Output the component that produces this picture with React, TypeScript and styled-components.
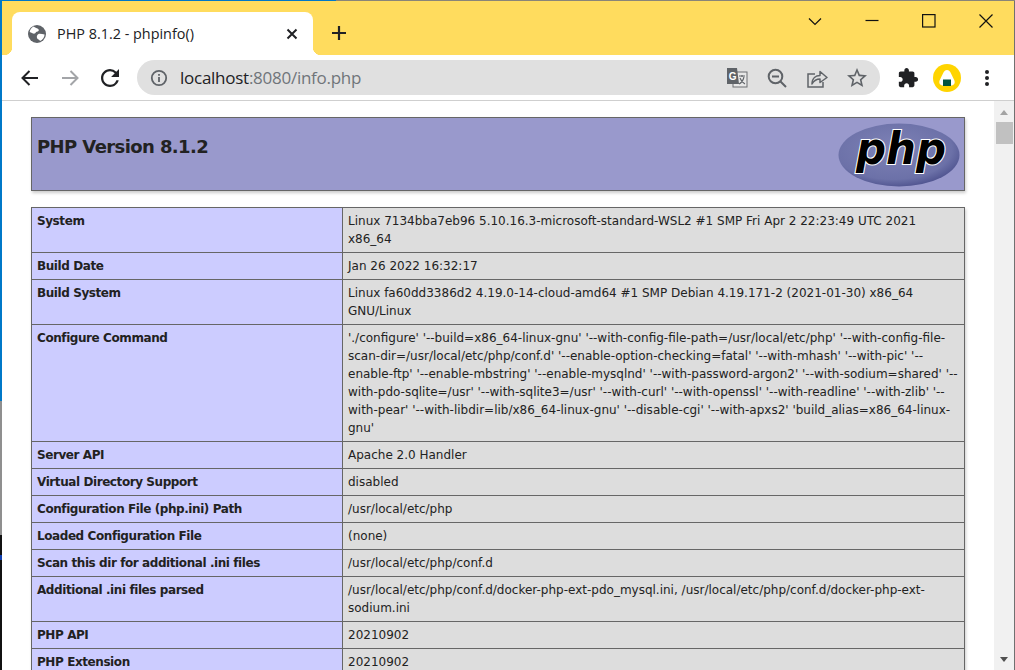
import React from "react";
import styled, { createGlobalStyle } from "styled-components";

const Global = createGlobalStyle`
  html, body { margin: 0; padding: 0; height: 100%; overflow: hidden; background: #fff; }
  #root { height: 100%; }
`;

const Screen = styled.div`
  width: 1015px;
  height: 670px;
  display: flex;
  flex-direction: column;
  overflow: hidden;
`;
const TopEdge = styled.div`
  height: 1px;
  flex: none;
  display: flex;
`;
const EdgePiece = styled.div<{ $c: string; $w?: number; $h?: number }>`
  background: ${(p) => p.$c};
  ${(p) => (p.$w ? `width:${p.$w}px;flex:none;` : "")}
  ${(p) => (p.$h ? `height:${p.$h}px;flex:none;` : "")}
  ${(p) => (!p.$w && !p.$h ? "flex:1;" : "")}
`;
const Middle = styled.div`
  flex: 1;
  min-height: 0;
  display: flex;
`;
const LeftEdge = styled.div`
  width: 2px;
  flex: none;
  display: flex;
  flex-direction: column;
`;
const RightEdge = styled.div`
  width: 1px;
  flex: none;
  background: #707070;
`;
const Win = styled.div`
  flex: 1;
  min-width: 0;
  display: flex;
  flex-direction: column;
`;

const TitleBar = styled.div`
  height: 54px;
  flex: none;
  background: #ffdc5e;
  display: flex;
  align-items: flex-end;
  padding-left: 10px;
`;
const Tab = styled.div`
  position: relative;
  width: 301px;
  height: 43px;
  box-sizing: border-box;
  background: #fff;
  border-radius: 8px 8px 0 0;
  display: flex;
  align-items: center;
  padding: 0 15px 0 16px;
  &::before, &::after {
    content: "";
    position: absolute;
    bottom: 0;
    width: 8px;
    height: 8px;
  }
  &::before { left: -8px; background: radial-gradient(circle at 0 0, #ffdc5e 8px, #fff 8.5px); }
  &::after { right: -8px; background: radial-gradient(circle at 100% 0, #ffdc5e 8px, #fff 8.5px); }
`;
const TabTitle = styled.span`
  flex: 1;
  margin-left: 11px;
  font: 14.4px/18px "Open Sans", "Noto Sans", sans-serif;
  color: #202124;
  white-space: nowrap;
`;
const NewTab = styled.div`
  width: 18px;
  height: 18px;
  margin: 0 0 13px 17px;
  display: flex;
`;
const Spacer = styled.div`
  flex: 1;
`;
const WinControls = styled.div`
  align-self: flex-start;
  display: flex;
  margin-top: 13px;
  padding-right: 21px;
  gap: 43px;
`;
const WinGlyph = styled.svg`
  width: 14px;
  height: 14px;
  display: block;
  fill: none;
  stroke: #111;
  stroke-width: 1.2;
`;

const Toolbar = styled.div`
  height: 46px;
  flex: none;
  box-sizing: border-box;
  background: #fff;
  border-bottom: 1px solid #cfcfcf;
  display: flex;
  align-items: center;
  padding-left: 16px;
`;
const NavIcon = styled.svg<{ $gap?: number }>`
  width: 24px;
  height: 24px;
  flex: none;
  margin-right: ${(p) => p.$gap ?? 16}px;
  display: block;
`;
const Omnibox = styled.div`
  width: 743px;
  height: 35px;
  margin-left: 2px;
  flex: none;
  background: #e0e0e0;
  border-radius: 18px;
  display: flex;
  align-items: center;
  padding: 0 12px 0 13px;
  box-sizing: border-box;
`;
const Url = styled.span`
  flex: 1;
  margin-left: 12px;
  font: 17px/22px "Open Sans", "Noto Sans", sans-serif;
  letter-spacing: -0.26px;
  color: #70757a;
  white-space: nowrap;
`;
const Host = styled.span`
  color: #202124;
`;
const OmniIcons = styled.div`
  display: flex;
  align-items: center;
  gap: 18px;
`;
const OmniIcon = styled.svg`
  width: 22px;
  height: 22px;
  display: block;
  flex: none;
`;
const Actions = styled.div`
  display: flex;
  align-items: center;
  margin-left: 17px;
`;
const Puzzle = styled.svg`
  width: 22px;
  height: 22px;
  display: block;
  margin-right: 14px;
`;
const Avatar = styled.svg`
  width: 28px;
  height: 28px;
  display: block;
  margin-right: 22px;
`;
const Dots = styled.svg`
  width: 8px;
  height: 18px;
  display: block;
`;

const Content = styled.div`
  flex: 1;
  min-height: 0;
  display: flex;
  background: #fff;
`;
const Page = styled.main`
  flex: 1;
  min-width: 0;
  overflow: hidden;
  padding: 16px 29px 0 29px;
  font-family: "DejaVu Sans", Verdana, sans-serif;
  color: #222;
`;
const Banner = styled.header`
  height: 74px;
  box-sizing: border-box;
  width: 934px;
  background: #9999cc;
  border: 1px solid #666;
  box-shadow: 1px 2px 3px #ccc;
  display: flex;
  justify-content: space-between;
  padding: 5px 4px 0 5px;
`;
const Heading = styled.h1`
  margin: 12px 0 0;
  font-size: 18px;
  line-height: 24px;
  font-weight: bold;
  letter-spacing: -0.6px;
  color: #222;
`;
const Logo = styled.svg`
  width: 122px;
  height: 64px;
  flex: none;
  display: block;
`;
const Info = styled.table`
  width: 934px;
  margin-top: 16px;
  border-collapse: collapse;
  table-layout: fixed;
  font-size: 12px;
  line-height: 18px;
  box-shadow: 1px 2px 3px #ccc;
`;
const Key = styled.td`
  width: 300px;
  background: #ccccff;
  font-weight: bold;
  letter-spacing: -0.42px;
  border: 1px solid #666;
  padding: 4px 5px;
  vertical-align: baseline;
`;
const Val = styled.td`
  background: #dddddd;
  border: 1px solid #666;
  padding: 4px 5px;
  vertical-align: baseline;
  word-break: normal;
`;

const Scrollbar = styled.aside`
  position: relative;
  width: 20px;
  flex: none;
  background: #f1f1f1;
`;
const Thumb = styled.div`
  position: absolute;
  top: 21px;
  left: 2px;
  right: 1px;
  height: 22px;
  background: #c1c1c1;
`;
const ArrowUp = styled.div`
  position: absolute;
  top: 9px;
  left: 6px;
  border-left: 4.5px solid transparent;
  border-right: 4.5px solid transparent;
  border-bottom: 5px solid #a3a3a3;
`;
const ArrowDown = styled.div`
  position: absolute;
  bottom: 8px;
  left: 6px;
  border-left: 4.5px solid transparent;
  border-right: 4.5px solid transparent;
  border-top: 5px solid #505050;
`;

const rows: [string, string][] = [
  ["System", "Linux 7134bba7eb96 5.10.16.3-microsoft-standard-WSL2 #1 SMP Fri Apr 2 22:23:49 UTC 2021 x86_64"],
  ["Build Date", "Jan 26 2022 16:32:17"],
  ["Build System", "Linux fa60dd3386d2 4.19.0-14-cloud-amd64 #1 SMP Debian 4.19.171-2 (2021-01-30) x86_64 GNU/Linux"],
  ["Configure Command", "'./configure' '--build=x86_64-linux-gnu' '--with-config-file-path=/usr/local/etc/php' '--with-config-file-scan-dir=/usr/local/etc/php/conf.d' '--enable-option-checking=fatal' '--with-mhash' '--with-pic' '--enable-ftp' '--enable-mbstring' '--enable-mysqlnd' '--with-password-argon2' '--with-sodium=shared' '--with-pdo-sqlite=/usr' '--with-sqlite3=/usr' '--with-curl' '--with-openssl' '--with-readline' '--with-zlib' '--with-pear' '--with-libdir=lib/x86_64-linux-gnu' '--disable-cgi' '--with-apxs2' 'build_alias=x86_64-linux-gnu'"],
  ["Server API", "Apache 2.0 Handler"],
  ["Virtual Directory Support", "disabled"],
  ["Configuration File (php.ini) Path", "/usr/local/etc/php"],
  ["Loaded Configuration File", "(none)"],
  ["Scan this dir for additional .ini files", "/usr/local/etc/php/conf.d"],
  ["Additional .ini files parsed", "/usr/local/etc/php/conf.d/docker-php-ext-pdo_mysql.ini, /usr/local/etc/php/conf.d/docker-php-ext-sodium.ini"],
  ["PHP API", "20210902"],
  ["PHP Extension", "20210902"],
];

export default function App() {
  return (
    <Screen>
      <Global />
      <TopEdge>
        <EdgePiece $c="#0078c8" $w={336} />
        <EdgePiece $c="#8a8578" />
      </TopEdge>
      <Middle>
        <LeftEdge>
          <EdgePiece $c="#0078c8" $h={400} />
          <EdgePiece $c="#8f8f8f" $h={134} />
          <EdgePiece $c="#111111" $h={20} />
          <EdgePiece $c="#1040b0" $h={5} />
          <EdgePiece $c="#111111" />
        </LeftEdge>
        <Win>
          <TitleBar>
            <Tab>
              <svg width="18" height="18" viewBox="0 0 18 18" style={{ flex: "none" }}>
                <circle cx="9" cy="9" r="9" fill="#5f6368" />
                <path d="M5.5 1.6 C7 3 9.5 3 10.5 4.2 C11.5 5.5 10 6.5 8.8 6.8 C7.5 7.1 7.8 8.3 6.5 8.6 C5 8.9 3.5 7.5 1.7 7 C2 4.6 3.5 2.7 5.5 1.6Z" fill="#fff" />
                <path d="M10.5 9 C12.5 8.5 14.5 9.5 16.6 9.5 C16.4 12.5 14.5 15 12 16 C11.5 14.5 9.5 14.5 9 13 C8.5 11.5 9 9.5 10.5 9Z" fill="#fff" />
              </svg>
              <TabTitle>PHP 8.1.2 - phpinfo()</TabTitle>
              <svg width="12" height="12" viewBox="0 0 12 12" style={{ flex: "none" }}>
                <path d="M1.5 1.5 L10.5 10.5 M10.5 1.5 L1.5 10.5" stroke="#202124" strokeWidth="2" />
              </svg>
            </Tab>
            <NewTab>
              <svg width="18" height="18" viewBox="0 0 18 18">
                <path d="M9 2 V16 M2 9 H16" stroke="#202124" strokeWidth="2.2" />
              </svg>
            </NewTab>
            <Spacer />
            <WinControls>
              <WinGlyph viewBox="0 0 14 14"><path d="M1 4.5 L7 10.5 L13 4.5" /></WinGlyph>
              <WinGlyph viewBox="0 0 14 14"><path d="M0.5 6.5 H13.5" /></WinGlyph>
              <WinGlyph viewBox="0 0 14 14"><rect x="0.6" y="0.6" width="12.4" height="12.4" /></WinGlyph>
              <WinGlyph viewBox="0 0 14 14"><path d="M0.5 0.5 L13.5 13.5 M13.5 0.5 L0.5 13.5" /></WinGlyph>
            </WinControls>
          </TitleBar>
          <Toolbar>
            <NavIcon viewBox="0 0 24 24" $gap={16}>
              <path d="M20 12 H5 M11.5 5 L4.5 12 L11.5 19" fill="none" stroke="#202124" strokeWidth="2" />
            </NavIcon>
            <NavIcon viewBox="0 0 24 24" $gap={16}>
              <path d="M4 12 H19 M12.5 5 L19.5 12 L12.5 19" fill="none" stroke="#a3a5a8" strokeWidth="2" />
            </NavIcon>
            <NavIcon viewBox="1.33 1.33 21.33 21.33" $gap={13}>
              <path fill="#202124" d="M17.65 6.35A7.958 7.958 0 0 0 12 4C7.58 4 4 7.58 4 12s3.58 8 8 8c3.73 0 6.84-2.55 7.73-6h-2.08A5.99 5.99 0 0 1 12 18c-3.31 0-6-2.69-6-6s2.69-6 6-6c1.66 0 3.14.69 4.22 1.78L13 11h7V4l-2.35 2.35z" />
            </NavIcon>
            <Omnibox>
              <svg width="18" height="18" viewBox="0 0 18 18" style={{ flex: "none" }}>
                <circle cx="9" cy="9" r="7.2" fill="none" stroke="#5f6368" strokeWidth="1.8" />
                <path d="M9 8 V13 M9 5 V6.8" stroke="#5f6368" strokeWidth="1.8" />
              </svg>
              <Url><Host>localhost</Host>:8080/info.php</Url>
              <OmniIcons>
                <OmniIcon viewBox="0 0 22 22">
                  <rect x="7" y="5" width="14" height="15" fill="#e8e8e8" stroke="#6d6f72" strokeWidth="1" />
                  <path d="M13 9 H19 M16 8 V10 M18 10 C17 14 15 16 13 17 M14 11 C15 14 17 16 19 17" fill="none" stroke="#5f6368" strokeWidth="1.1" />
                  <path d="M1 1 H11 L13 17 H1 Z" fill="#5f6368" />
                  <text x="2.8" y="12.5" fontFamily="'Liberation Sans', sans-serif" fontWeight="700" fontSize="10" fill="#fff">G</text>
                </OmniIcon>
                <OmniIcon viewBox="0 0 22 22">
                  <circle cx="9.5" cy="9.5" r="6.8" fill="none" stroke="#5f6368" strokeWidth="2" />
                  <path d="M6 9.5 H13 M14.5 14.5 L20 20" fill="none" stroke="#5f6368" strokeWidth="2" />
                </OmniIcon>
                <OmniIcon viewBox="0 0 22 22">
                  <path d="M9 7 H2 V20 H17 V15" fill="none" stroke="#5f6368" strokeWidth="1.5" />
                  <path d="M6 17 C6 11 10 8.5 14 8.5 V4.5 L21 10.5 L14 15.5 V12 C10.5 12 8 13.5 6 17Z" fill="none" stroke="#5f6368" strokeWidth="1.5" strokeLinejoin="round" />
                </OmniIcon>
                <OmniIcon viewBox="1 1 22 22">
                  <path fill="#5f6368" d="M22 9.24l-7.19-.62L12 2 9.19 8.63 2 9.24l5.46 4.73L5.82 21 12 17.27 18.18 21l-1.63-7.03L22 9.24zM12 15.4l-3.76 2.27 1-4.28-3.32-2.88 4.38-.38L12 6.1l1.71 4.04 4.38.38-3.32 2.88 1 4.28L12 15.4z" />
                </OmniIcon>
              </OmniIcons>
            </Omnibox>
            <Actions>
              <Puzzle viewBox="0 0 24 24">
                <path fill="#202124" d="M20.5 11H19V7c0-1.1-.9-2-2-2h-4V3.5C13 2.12 11.88 1 10.5 1S8 2.12 8 3.5V5H4c-1.1 0-1.99.9-1.99 2v3.8H3.5c1.49 0 2.7 1.21 2.7 2.7s-1.21 2.7-2.7 2.7H2V20c0 1.1.9 2 2 2h3.8v-1.5c0-1.49 1.21-2.7 2.7-2.7 1.49 0 2.7 1.21 2.7 2.7V22H17c1.1 0 2-.9 2-2v-4h1.5c1.38 0 2.5-1.12 2.5-2.5S21.88 11 20.5 11z" />
              </Puzzle>
              <Avatar viewBox="0 0 28 28">
                <circle cx="14" cy="14" r="14" fill="#ffd400" />
                <path d="M14 6 C16 6 17 7.5 18 9.5 L21.2 16 C22.5 19 21 21.5 18 21.5 H10 C7 21.5 5.5 19 6.8 16 L10 9.5 C11 7.5 12 6 14 6Z" fill="#fff" />
                <rect x="10" y="15.5" width="8" height="6.5" fill="#00543f" />
              </Avatar>
              <Dots viewBox="0 0 8 18">
                <circle cx="4" cy="3" r="2" fill="#202124" />
                <circle cx="4" cy="9" r="2" fill="#202124" />
                <circle cx="4" cy="15" r="2" fill="#202124" />
              </Dots>
            </Actions>
          </Toolbar>
          <Content>
            <Page>
              <Banner>
                <Heading>PHP Version 8.1.2</Heading>
                <Logo viewBox="0 0 122 64">
                  <defs>
                    <radialGradient id="elephant" cx="45%" cy="40%" r="65%">
                      <stop offset="0%" stopColor="#7e82b6" />
                      <stop offset="75%" stopColor="#6c71a8" />
                      <stop offset="100%" stopColor="#484c89" />
                    </radialGradient>
                  </defs>
                  <ellipse cx="61" cy="32" rx="60.5" ry="31.5" fill="url(#elephant)" />
                  <text
                    x="18"
                    y="41"
                    textLength="90"
                    lengthAdjust="spacingAndGlyphs"
                    fontFamily="'DejaVu Sans', sans-serif"
                    fontWeight="700"
                    fontStyle="italic"
                    fontSize="44"
                    fill="#000"
                    stroke="#fff"
                    strokeWidth="2.2"
                    paintOrder="stroke"
                  >
                    php
                  </text>
                </Logo>
              </Banner>
              <Info>
                <tbody>
                  {rows.map(([k, v]) => (
                    <tr key={k}>
                      <Key>{k}</Key>
                      <Val>{v}</Val>
                    </tr>
                  ))}
                </tbody>
              </Info>
            </Page>
            <Scrollbar>
              <ArrowUp />
              <Thumb />
              <ArrowDown />
            </Scrollbar>
          </Content>
        </Win>
        <RightEdge />
      </Middle>
    </Screen>
  );
}
